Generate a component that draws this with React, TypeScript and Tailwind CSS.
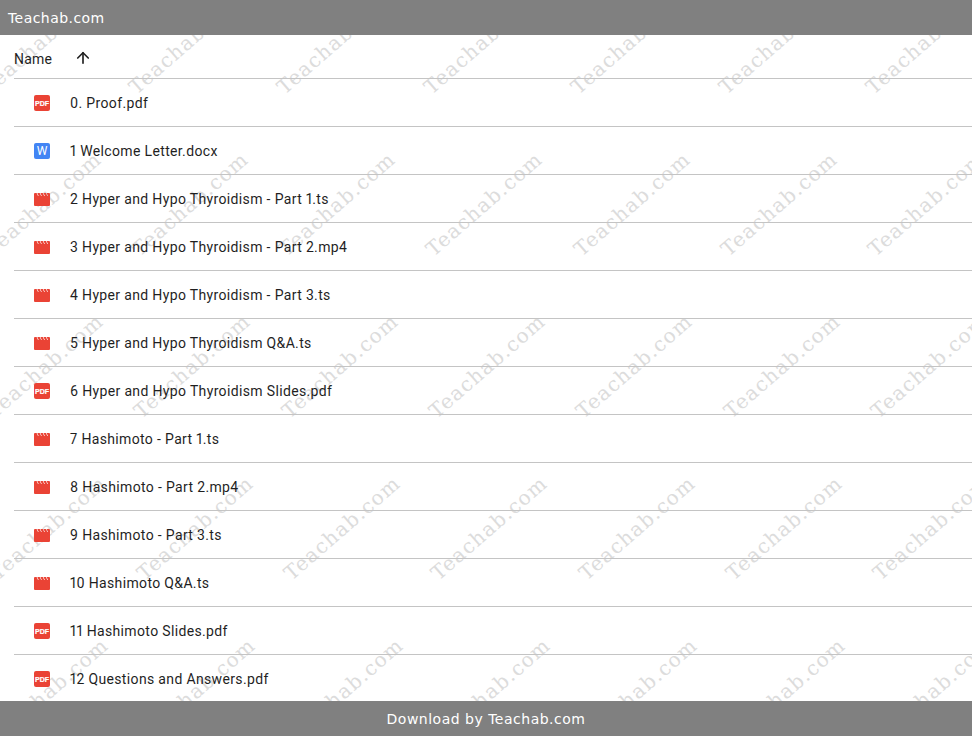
import React from "react";
import { ArrowUp } from "lucide-react";

type Kind = "pdf" | "doc" | "video";

const files: { name: string; kind: Kind }[] = [
  { name: "0. Proof.pdf", kind: "pdf" },
  { name: "1 Welcome Letter.docx", kind: "doc" },
  { name: "2 Hyper and Hypo Thyroidism - Part 1.ts", kind: "video" },
  { name: "3 Hyper and Hypo Thyroidism - Part 2.mp4", kind: "video" },
  { name: "4 Hyper and Hypo Thyroidism - Part 3.ts", kind: "video" },
  { name: "5 Hyper and Hypo Thyroidism Q&A.ts", kind: "video" },
  { name: "6 Hyper and Hypo Thyroidism Slides.pdf", kind: "pdf" },
  { name: "7 Hashimoto - Part 1.ts", kind: "video" },
  { name: "8 Hashimoto - Part 2.mp4", kind: "video" },
  { name: "9 Hashimoto - Part 3.ts", kind: "video" },
  { name: "10 Hashimoto Q&A.ts", kind: "video" },
  { name: "11 Hashimoto Slides.pdf", kind: "pdf" },
  { name: "12 Questions and Answers.pdf", kind: "pdf" },
];

function PdfIcon() {
  return (
    <svg width="16" height="16" viewBox="0 0 16 16">
      <rect width="16" height="16" rx="2" fill="#ea4335" />
      <text
        x="8"
        y="10.6"
        textAnchor="middle"
        fontSize="7"
        fontWeight="700"
        fill="#fff"
        stroke="#fff"
        strokeWidth="0.2"
        fontFamily="Liberation Sans, sans-serif"
      >
        PDF
      </text>
    </svg>
  );
}

function DocIcon() {
  return (
    <svg width="16" height="16" viewBox="0 0 16 16">
      <rect width="16" height="16" rx="2" fill="#4285f4" />
      <text x="8" y="12.3" textAnchor="middle" fontSize="12" fill="#fff" fontFamily="Roboto, sans-serif">
        W
      </text>
    </svg>
  );
}

function VideoIcon() {
  return (
    <svg width="16" height="16" viewBox="0 0 16 16">
      <path
        fill="#ea4335"
        d="M1 2h1.6l1.4 3h.7L3.3 2h2.4l1.4 3h.7L6.4 2h2.4l1.4 3h.7L9.5 2h2.4l1.4 3h.7L12.6 2H15a1 1 0 0 1 1 1v11a1 1 0 0 1-1 1H1a1 1 0 0 1-1-1V3a1 1 0 0 1 1-1z"
      />
    </svg>
  );
}

const icons: Record<Kind, React.ReactNode> = {
  pdf: <PdfIcon />,
  doc: <DocIcon />,
  video: <VideoIcon />,
};

// tiled watermark, each row drifts a little to the right
const marks: { x: number; y: number }[] = [];
for (let row = 0; row < 5; row++) {
  for (let col = 0; col < 7; col++) {
    marks.push({ x: 40 + row * 2.5 + col * 147.3, y: 42 + row * 162 });
  }
}

export default function App() {
  return (
    <div className="relative flex h-[736px] w-[972px] flex-col overflow-hidden bg-white font-['Roboto',sans-serif]">
      {marks.map((m) => (
        <span
          key={`${m.x}-${m.y}`}
          className="pointer-events-none absolute -translate-x-1/2 -translate-y-1/2 -rotate-[41deg] whitespace-nowrap font-['DejaVu_Serif',serif] text-[20px] leading-none tracking-[1.2px] text-[#dcdcdc]"
          style={{ left: m.x, top: m.y }}
        >
          Teachab.com
        </span>
      ))}

      <header className="z-10 flex h-[35px] shrink-0 items-center bg-[#808080] pl-2 font-['DejaVu_Sans',sans-serif] text-sm tracking-[0.45px] text-white">
        Teachab.com
      </header>

      <main className="relative min-h-0 flex-1 overflow-hidden pl-[14px]">
        <div className="flex h-[44px] items-center border-b border-[#c4c4c4] text-sm text-[#1f1f1f]">
          <span className="w-[60px] pt-1 tracking-[0.2px]">Name</span>
          <ArrowUp className="mt-0.5 h-[18px] w-[18px]" strokeWidth={2.2} />
        </div>
        {files.map((file) => (
          <div key={file.name} className="flex h-[48px] items-center border-b border-[#c4c4c4] pl-5">
            <span className="flex w-9 shrink-0">{icons[file.kind]}</span>
            <span className="whitespace-pre text-sm tracking-[0.35px] text-[#1f1f1f] proportional-nums">{file.name}</span>
          </div>
        ))}
      </main>

      <footer className="z-10 flex h-[35px] shrink-0 items-center justify-center bg-[#808080] font-['DejaVu_Sans',sans-serif] text-sm tracking-[0.5px] text-white">
        Download by Teachab.com
      </footer>
    </div>
  );
}
